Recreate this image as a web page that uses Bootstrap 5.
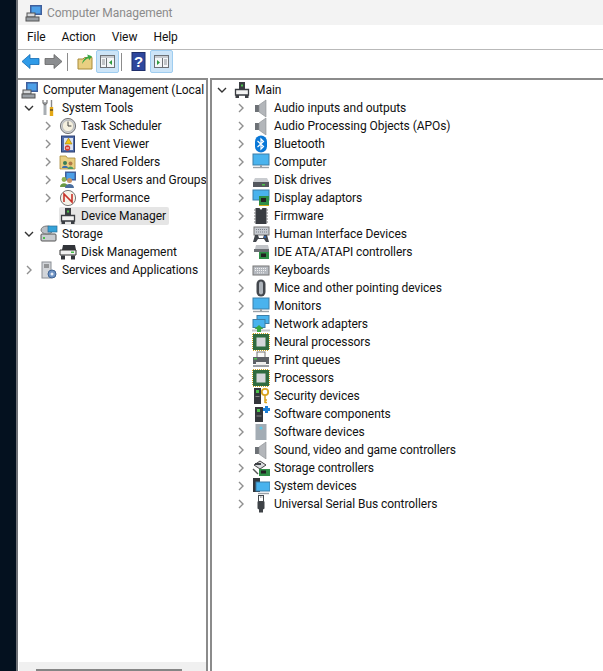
<!DOCTYPE html>
<html lang="en"><head><meta charset="utf-8"><title>Computer Management</title>
<link href="https://cdn.jsdelivr.net/npm/bootstrap@5.3.0/dist/css/bootstrap.min.css" rel="stylesheet">
<style>
html,body{height:100%;overflow:hidden}
body{background:#04111f;font-family:Roboto,"Noto Sans",sans-serif;font-size:12px;letter-spacing:-.06px;color:#111;padding-left:16px}
.win{height:671px;background:#fff;border-left:2px solid #6e7176}
.tbar{height:25px;background:#f3f3f3;color:#8b8b8b;font-size:12px;padding-left:7px;gap:4px}
.mbar{height:25px;padding-left:9px;gap:16px;border-bottom:1px solid #b9b9b9}
.tools{height:28px;padding:0 0 5px 1px}
.sep{width:1px;height:18px;background:#8c8c8c;margin:0 5px 0 2px}
.tb{width:23px;height:23px}
.tb.on{background:#cce4f7;border:1px solid #9fcdf0;border-radius:2px;padding:0}
.panes{height:593px}
.lpane{width:190px;border:1px solid #8b8b8b;border-width:2px 2px 0 0;position:relative;overflow:hidden;padding-top:1px}
.split{width:2px}
.rpane{flex:1;border-left:2px solid #8b8b8b;border-top:2px solid #8b8b8b;padding-top:1px}
.trow{height:18px;white-space:nowrap;line-height:18px}
.chev{width:10px;height:10px;flex:none;margin-right:6px}
.ic{width:18px;height:18px;flex:none;margin-right:3px}
.l0{padding-left:3px}.l1{padding-left:6px}.l2{padding-left:25px}
.r0{padding-left:5px}.r1{padding-left:24px}
.lbl{padding:0 1px}
.sel{background:#e5e5e5;border-radius:2px;padding-right:2px;margin-right:2px}
.hs{position:absolute;left:1px;right:0;bottom:0;height:9px;background:#f0f0f0}
.hst{position:absolute;left:17px;width:146px;bottom:0;height:2px;background:#858585}
</style></head><body>
<svg width="0" height="0" style="position:absolute"><defs>
<symbol id="cv" viewBox="0 0 10 10"><path d="M3 1l4 4-4 4" fill="none" stroke="#8f8f8f" stroke-width="1.4"/></symbol>
<symbol id="cd" viewBox="0 0 10 10"><path d="M1 3l4 4 4-4" fill="none" stroke="#333" stroke-width="1.4"/></symbol>
<symbol id="mgr" viewBox="0 0 18 18"><rect x="5" y="1" width="12" height="10" fill="#3f5f9c"/><rect x="6.500" y="2.500" width="9" height="7" fill="#4da0e8"/><rect x="2" y="9" width="8" height="4" fill="#d6d9dc" stroke="#555"/><rect x="1" y="13" width="13" height="4" fill="#9aa0a6" stroke="#555"/></symbol>
<symbol id="tools" viewBox="0 0 18 18"><path d="M5 3v13" stroke="#a9aeb3" stroke-width="3"/><path d="M3 1v3l2 2 2-2V1" fill="none" stroke="#777" stroke-width="1.2"/><path d="M11.500 1v7" stroke="#888" stroke-width="1.4"/><path d="M11.500 8v9" stroke="#e4a815" stroke-width="3.4"/><path d="M10 11h3" stroke="#222"/></symbol>
<symbol id="clock" viewBox="0 0 18 18"><circle cx="9" cy="9" r="7.600" fill="#c9ccd0" stroke="#777"/><circle cx="9" cy="9" r="5.600" fill="#f6f1df" stroke="#aaa" stroke-width=".6"/><path d="M9 4.500V9h3.400" fill="none" stroke="#444"/></symbol>
<symbol id="event" viewBox="0 0 18 18"><rect x="2.500" y="1" width="13" height="16" fill="#4e6cab" stroke="#2d3f70"/><rect x="5" y="3" width="9" height="12" fill="#dde4f1"/><path d="M9.500 3l3.500 6H6z" fill="#f2c415" stroke="#8a6d00" stroke-width=".5"/><circle cx="8.500" cy="13" r="2.700" fill="#d43c32"/><path d="M7 13h3" stroke="#fff"/></symbol>
<symbol id="folder" viewBox="0 0 18 18"><path d="M1 5V3h6l1.500 2H16v11H1z" fill="#e9cf81" stroke="#a88b3a" stroke-width=".8"/><circle cx="6" cy="10" r="2" fill="#3a7e57"/><path d="M3 15c0-3 6-3 6 0z" fill="#3a6fb0"/><circle cx="11.500" cy="10.500" r="2" fill="#b07a4a"/><path d="M8.500 16c0-3.500 6-3.500 6 0z" fill="#4c9a62"/></symbol>
<symbol id="users" viewBox="0 0 18 18"><rect x="6" y="0.500" width="11" height="9" fill="#3f5f9c"/><rect x="7.500" y="2" width="8" height="6" fill="#4da0e8"/><circle cx="5" cy="8.500" r="2.400" fill="#8fb04f"/><path d="M1 16c0-5 8-5 8 0z" fill="#6a9a44"/><circle cx="10.500" cy="9.500" r="2.500" fill="#c99569"/><path d="M6 17c0-5.500 9-5.500 9 0z" fill="#4b6f9e"/></symbol>
<symbol id="perf" viewBox="0 0 18 18"><circle cx="9" cy="9" r="7.600" fill="#f5f2e8" stroke="#777"/><path d="M5 13V5l8 8V5" fill="none" stroke="#c8322a" stroke-width="1.600"/></symbol>
<symbol id="dev" viewBox="0 0 18 18"><path d="M6 1h6v7H6z" fill="#3a3d42"/><rect x="8" y="3.500" width="2" height="2" fill="#4bc14b"/><path d="M2.500 8.500h13V14h-13z" fill="#f3f3f3" stroke="#3a3d42" stroke-width="1.300"/><rect x="2.500" y="14" width="3.500" height="3" fill="#3a3d42"/><rect x="12" y="14" width="3.500" height="3" fill="#3a3d42"/></symbol>
<symbol id="stor" viewBox="0 0 18 18"><rect x="1" y="9" width="15" height="7" rx="1" fill="#c9ccd0" stroke="#555"/><rect x="3" y="12" width="2" height="2" fill="#4bc14b"/><ellipse cx="7" cy="5" rx="6" ry="4" fill="#b9bec4" stroke="#777"/><rect x="8" y="1" width="9" height="6" fill="#35a2d8" stroke="#2a6d96" stroke-width=".7"/></symbol>
<symbol id="disk" viewBox="0 0 18 18"><path d="M4 2h12l1 5H3z" fill="#32353a"/><path d="M1 7h16v5H1z" fill="#f1f1f1" stroke="#333"/><rect x="12" y="8.500" width="3" height="1.500" fill="#4bc14b"/><rect x="2" y="12.500" width="4" height="4" fill="#32353a"/><rect x="12" y="12.500" width="4" height="4" fill="#32353a"/></symbol>
<symbol id="serv" viewBox="0 0 18 18"><rect x="2" y="1" width="9" height="16" fill="#d2d5d9" stroke="#8a8e94"/><path d="M4 4h5M4 6h5" stroke="#555"/><circle cx="12" cy="13" r="4" fill="#6f93c4" stroke="#3f6393"/><circle cx="12" cy="13" r="1.500" fill="#e8eef7"/></symbol>
<symbol id="aud" viewBox="0 0 18 18"><rect x="3" y="6" width="4" height="7" fill="#6d7176"/><path d="M7 6l7-5v17l-7-5z" fill="#b3b6ba" stroke="#8a8d91" stroke-width=".6"/></symbol>
<symbol id="bt" viewBox="0 0 18 18"><rect x="3" y="0.500" width="12" height="17" rx="6" fill="#0a78d7"/><path d="M5.500 6l6 5.500L9 14V4l2.500 2.500-6 5.500" fill="none" stroke="#fff" stroke-width="1.200"/></symbol>
<symbol id="mon" viewBox="0 0 18 18"><rect x="1" y="1" width="16" height="11" fill="#49b3ee" stroke="#3d7ea8"/><path d="M8 12h2v2H8z" fill="#9aa0a6"/><path d="M1 14.500h16" stroke="#9aa0a6" stroke-width="1.400"/></symbol>
<symbol id="dd" viewBox="0 0 18 18"><path d="M3 7h12l2 4H1z" fill="#c9ccd0"/><rect x="1" y="11" width="16" height="5" fill="#54585e"/><rect x="10" y="13" width="3" height="1.500" fill="#4bc14b"/></symbol>
<symbol id="dsp" viewBox="0 0 18 18"><rect x="1" y="1" width="16" height="10" fill="#49b3ee" stroke="#3d7ea8"/><rect x="7" y="7" width="10" height="9" fill="#2f8f47"/><rect x="9" y="9" width="5" height="4" fill="#222"/><path d="M7 16.500h10" stroke="#d4a91a"/></symbol>
<symbol id="fw" viewBox="0 0 18 18"><path d="M2 3h1.500M2 6h1.500M2 9h1.500M2 12h1.500M2 15h1.500M14.500 3H16M14.500 6H16M14.500 9H16M14.500 12H16M14.500 15H16" stroke="#777"/><path d="M3.500 1h4l1.500 2 1.500-2h4v16h-11z" fill="#3a3d42"/></symbol>
<symbol id="hid" viewBox="0 0 18 18"><rect x="2" y="2" width="15" height="8" fill="#c6cad0" stroke="#777"/><path d="M4 4.500h11M4 7h11" stroke="#7d828a" stroke-dasharray="1 1"/><path d="M1 17l2-7h3l1 3h4l1-3h3l2 7h-3l-2-3H6l-2 3z" fill="#40444a"/><circle cx="13" cy="12" r="1" fill="#2f6fc4"/></symbol>
<symbol id="ide" viewBox="0 0 18 18"><path d="M4 2h12l1 4H3z" fill="#c2c5c9"/><rect x="2" y="6" width="15" height="3" fill="#6c7075"/><rect x="7" y="9" width="10" height="7" fill="#2f8f47"/><rect x="9" y="10.500" width="5" height="3.500" fill="#222"/></symbol>
<symbol id="kb" viewBox="0 0 18 18"><rect x="1" y="5" width="16" height="9" fill="#b6bac0" stroke="#777"/><path d="M3 7.500h12M3 9.500h12M5 11.800h8" stroke="#f2f2f2" stroke-dasharray="1 1"/></symbol>
<symbol id="mouse" viewBox="0 0 18 18"><rect x="4.500" y="0.500" width="9" height="17" rx="4.500" fill="#43474d"/><rect x="7" y="2.500" width="4" height="13" rx="2" fill="#aeb4bb"/></symbol>
<symbol id="net" viewBox="0 0 18 18"><rect x="5" y="0.500" width="12" height="8" fill="#49b3ee" stroke="#3d7ea8"/><rect x="1" y="4.500" width="12" height="8" fill="#49b3ee" stroke="#3d7ea8"/><path d="M0 15.500h18" stroke="#c4c7cb" stroke-width="2"/><path d="M7 10l4.500 4H9v3H5v-3H2.500z" fill="#3aa845"/></symbol>
<symbol id="cpu" viewBox="0 0 18 18"><rect x="1" y="1" width="16" height="16" fill="#2f6b3f"/><path d="M1 .5h16M1 17.500h16M.5 1v16M17.500 1v16" stroke="#c9a227" stroke-dasharray="1 1"/><rect x="4.500" y="4.500" width="9" height="9" fill="#d5d7da"/></symbol>
<symbol id="prt" viewBox="0 0 18 18"><rect x="5" y="1" width="8" height="6" fill="#fafafa" stroke="#777"/><rect x="1" y="6" width="16" height="7" fill="#5d6167"/><rect x="2" y="7" width="3" height="1.500" fill="#4bc14b"/><rect x="4" y="11" width="10" height="3" fill="#eee"/><rect x="1" y="14" width="16" height="2" fill="#9b9fa5"/></symbol>
<symbol id="sec" viewBox="0 0 18 18"><rect x="2" y="1" width="7" height="16" fill="#33363b"/><rect x="4" y="3" width="3" height="3" fill="#4bc14b"/><rect x="3.500" y="9" width="4" height="1" fill="#888"/><circle cx="13" cy="5" r="3.200" fill="none" stroke="#d9a520" stroke-width="1.800"/><path d="M13 8v8M13 13h2M13 15.500h2" stroke="#d9a520" stroke-width="1.500"/></symbol>
<symbol id="sw" viewBox="0 0 18 18"><rect x="3" y="2" width="8" height="15" fill="#33363b"/><rect x="5" y="4" width="3" height="3" fill="#4bc14b"/><path d="M4.500 11h5" stroke="#888"/><path d="M11 3h2V1h3v2h2v3h-2v2h-3V6h-2z" fill="#1c7fd6"/></symbol>
<symbol id="swd" viewBox="0 0 18 18"><rect x="3.500" y="1" width="11" height="16" fill="#a3acb4"/><circle cx="9" cy="5" r="1.500" fill="#5cc8e8"/></symbol>
<symbol id="sc" viewBox="0 0 18 18"><path d="M2 6l6-4 6 4-6 4z" fill="#d8dadd" stroke="#444"/><rect x="3" y="4" width="6" height="2" fill="#3d4045"/><rect x="7" y="10" width="11" height="7" fill="#2f8f47"/><rect x="9" y="11.500" width="5" height="3" fill="#222"/><path d="M1 10l5 5" stroke="#555" stroke-width="1.400"/></symbol>
<symbol id="sys" viewBox="0 0 18 18"><rect x="1" y="1" width="7" height="14" fill="#33363b"/><rect x="4" y="5" width="14" height="9" fill="#49b3ee" stroke="#3d7ea8"/><path d="M6 16.500h11" stroke="#9aa0a6" stroke-width="1.400"/></symbol>
<symbol id="usb" viewBox="0 0 18 18"><rect x="6.500" y="0.500" width="5" height="6" fill="#fff" stroke="#44484d"/><path d="M8 2h.8M9.500 2h.8" stroke="#44484d"/><path d="M5.500 6.500h7v7l-1.500 1v3H7v-3l-1.500-1z" fill="#3e4247"/></symbol>
<symbol id="back" viewBox="0 0 23 23"><path d="M3 11.500L11 4.500v4h9v6h-9v4z" fill="#2f9be8" stroke="#136bb3" stroke-width=".8"/></symbol>
<symbol id="fwd" viewBox="0 0 23 23"><path d="M20 11.500L12 4.500v4H3v6h9v4z" fill="#8b8d90" stroke="#666" stroke-width=".8"/></symbol>
<symbol id="up" viewBox="0 0 23 23"><path d="M5 9h5l1.500-1.500H19V19H5z" fill="#e9cf81" stroke="#a88b3a"/><path d="M9 14c.8-4 2.500-6.500 6-7.500l-.8-2 4.800 1.700-2.800 4-.7-1.900c-2.500.7-4.500 2.700-6.500 5.700z" fill="#3aa845"/></symbol>
<symbol id="pl" viewBox="0 0 21 21"><rect x="3.500" y="4.500" width="14" height="12" fill="#f4f6f8" stroke="#6d7176"/><rect x="4" y="5" width="13" height="2" fill="#c6cacf"/><path d="M9.500 7v9" stroke="#6d7176"/><path d="M5 9h3M5 11h3M5 13h3" stroke="#8f9398"/><path d="M15 9v5l-3-2.500z" fill="#2f9a3f"/></symbol>
<symbol id="pr" viewBox="0 0 21 21"><rect x="3.500" y="4.500" width="14" height="12" fill="#f4f6f8" stroke="#6d7176"/><rect x="4" y="5" width="13" height="2" fill="#c6cacf"/><path d="M11.500 7v9" stroke="#6d7176"/><path d="M13 9h3M13 11h3M13 13h3" stroke="#8f9398"/><path d="M6 9v5l3-2.500z" fill="#2f9a3f"/></symbol>
<symbol id="help" viewBox="0 0 23 23"><rect x="5" y="2.500" width="13" height="18" fill="#2e479d" stroke="#1f2f6b"/><text x="11.500" y="17" text-anchor="middle" font-size="15" font-weight="700" fill="#fff" font-family="Liberation Sans">?</text></symbol>
</defs></svg>

<div class="win d-flex flex-column">
  <div class="tbar d-flex align-items-center"><svg class="ic m-0"><use href="#mgr"/></svg><span>Computer Management</span></div>
  <div class="mbar d-flex align-items-center"><span>File</span><span>Action</span><span>View</span><span>Help</span></div>
  <div class="tools d-flex align-items-center">
    <svg class="tb"><use href="#back"/></svg><svg class="tb"><use href="#fwd"/></svg><div class="sep"></div>
    <svg class="tb"><use href="#up"/></svg><svg class="tb on"><use href="#pl"/></svg><div class="sep"></div>
    <svg class="tb"><use href="#help"/></svg><svg class="tb on"><use href="#pr"/></svg>
  </div>
  <div class="panes d-flex">
    <div class="lpane">
      <div class="trow d-flex align-items-center l0"><svg class="ic"><use href="#mgr"/></svg><span class="lbl">Computer Management (Local</span></div>
      <div class="trow d-flex align-items-center l1"><svg class="chev"><use href="#cd"/></svg><svg class="ic"><use href="#tools"/></svg><span class="lbl">System Tools</span></div>
      <div class="trow d-flex align-items-center l2"><svg class="chev"><use href="#cv"/></svg><svg class="ic"><use href="#clock"/></svg><span class="lbl">Task Scheduler</span></div>
      <div class="trow d-flex align-items-center l2"><svg class="chev"><use href="#cv"/></svg><svg class="ic"><use href="#event"/></svg><span class="lbl">Event Viewer</span></div>
      <div class="trow d-flex align-items-center l2"><svg class="chev"><use href="#cv"/></svg><svg class="ic"><use href="#folder"/></svg><span class="lbl">Shared Folders</span></div>
      <div class="trow d-flex align-items-center l2"><svg class="chev"><use href="#cv"/></svg><svg class="ic"><use href="#users"/></svg><span class="lbl">Local Users and Groups</span></div>
      <div class="trow d-flex align-items-center l2"><svg class="chev"><use href="#cv"/></svg><svg class="ic"><use href="#perf"/></svg><span class="lbl">Performance</span></div>
      <div class="trow d-flex align-items-center l2"><svg class="chev invisible"></svg><div class="d-flex align-items-center sel"><svg class="ic"><use href="#dev"/></svg><span class="lbl">Device Manager</span></div></div>
      <div class="trow d-flex align-items-center l1"><svg class="chev"><use href="#cd"/></svg><svg class="ic"><use href="#stor"/></svg><span class="lbl">Storage</span></div>
      <div class="trow d-flex align-items-center l2"><svg class="chev invisible"></svg><svg class="ic"><use href="#disk"/></svg><span class="lbl">Disk Management</span></div>
      <div class="trow d-flex align-items-center l1"><svg class="chev"><use href="#cv"/></svg><svg class="ic"><use href="#serv"/></svg><span class="lbl">Services and Applications</span></div>
      <div class="hs"><div class="hst"></div></div>
    </div>
    <div class="split"></div>
    <div class="rpane">
      <div class="trow d-flex align-items-center r0"><svg class="chev"><use href="#cd"/></svg><svg class="ic"><use href="#dev"/></svg><span class="lbl">Main</span></div>
      <div class="trow d-flex align-items-center r1"><svg class="chev"><use href="#cv"/></svg><svg class="ic"><use href="#aud"/></svg><span class="lbl">Audio inputs and outputs</span></div>
      <div class="trow d-flex align-items-center r1"><svg class="chev"><use href="#cv"/></svg><svg class="ic"><use href="#aud"/></svg><span class="lbl">Audio Processing Objects (APOs)</span></div>
      <div class="trow d-flex align-items-center r1"><svg class="chev"><use href="#cv"/></svg><svg class="ic"><use href="#bt"/></svg><span class="lbl">Bluetooth</span></div>
      <div class="trow d-flex align-items-center r1"><svg class="chev"><use href="#cv"/></svg><svg class="ic"><use href="#mon"/></svg><span class="lbl">Computer</span></div>
      <div class="trow d-flex align-items-center r1"><svg class="chev"><use href="#cv"/></svg><svg class="ic"><use href="#dd"/></svg><span class="lbl">Disk drives</span></div>
      <div class="trow d-flex align-items-center r1"><svg class="chev"><use href="#cv"/></svg><svg class="ic"><use href="#dsp"/></svg><span class="lbl">Display adaptors</span></div>
      <div class="trow d-flex align-items-center r1"><svg class="chev"><use href="#cv"/></svg><svg class="ic"><use href="#fw"/></svg><span class="lbl">Firmware</span></div>
      <div class="trow d-flex align-items-center r1"><svg class="chev"><use href="#cv"/></svg><svg class="ic"><use href="#hid"/></svg><span class="lbl">Human Interface Devices</span></div>
      <div class="trow d-flex align-items-center r1"><svg class="chev"><use href="#cv"/></svg><svg class="ic"><use href="#ide"/></svg><span class="lbl">IDE ATA/ATAPI controllers</span></div>
      <div class="trow d-flex align-items-center r1"><svg class="chev"><use href="#cv"/></svg><svg class="ic"><use href="#kb"/></svg><span class="lbl">Keyboards</span></div>
      <div class="trow d-flex align-items-center r1"><svg class="chev"><use href="#cv"/></svg><svg class="ic"><use href="#mouse"/></svg><span class="lbl">Mice and other pointing devices</span></div>
      <div class="trow d-flex align-items-center r1"><svg class="chev"><use href="#cv"/></svg><svg class="ic"><use href="#mon"/></svg><span class="lbl">Monitors</span></div>
      <div class="trow d-flex align-items-center r1"><svg class="chev"><use href="#cv"/></svg><svg class="ic"><use href="#net"/></svg><span class="lbl">Network adapters</span></div>
      <div class="trow d-flex align-items-center r1"><svg class="chev"><use href="#cv"/></svg><svg class="ic"><use href="#cpu"/></svg><span class="lbl">Neural processors</span></div>
      <div class="trow d-flex align-items-center r1"><svg class="chev"><use href="#cv"/></svg><svg class="ic"><use href="#prt"/></svg><span class="lbl">Print queues</span></div>
      <div class="trow d-flex align-items-center r1"><svg class="chev"><use href="#cv"/></svg><svg class="ic"><use href="#cpu"/></svg><span class="lbl">Processors</span></div>
      <div class="trow d-flex align-items-center r1"><svg class="chev"><use href="#cv"/></svg><svg class="ic"><use href="#sec"/></svg><span class="lbl">Security devices</span></div>
      <div class="trow d-flex align-items-center r1"><svg class="chev"><use href="#cv"/></svg><svg class="ic"><use href="#sw"/></svg><span class="lbl">Software components</span></div>
      <div class="trow d-flex align-items-center r1"><svg class="chev"><use href="#cv"/></svg><svg class="ic"><use href="#swd"/></svg><span class="lbl">Software devices</span></div>
      <div class="trow d-flex align-items-center r1"><svg class="chev"><use href="#cv"/></svg><svg class="ic"><use href="#aud"/></svg><span class="lbl">Sound, video and game controllers</span></div>
      <div class="trow d-flex align-items-center r1"><svg class="chev"><use href="#cv"/></svg><svg class="ic"><use href="#sc"/></svg><span class="lbl">Storage controllers</span></div>
      <div class="trow d-flex align-items-center r1"><svg class="chev"><use href="#cv"/></svg><svg class="ic"><use href="#sys"/></svg><span class="lbl">System devices</span></div>
      <div class="trow d-flex align-items-center r1"><svg class="chev"><use href="#cv"/></svg><svg class="ic"><use href="#usb"/></svg><span class="lbl">Universal Serial Bus controllers</span></div>
    </div>
  </div>
</div>
<script src="https://cdn.jsdelivr.net/npm/bootstrap@5.3.0/dist/js/bootstrap.bundle.min.js"></script>
</body></html>
